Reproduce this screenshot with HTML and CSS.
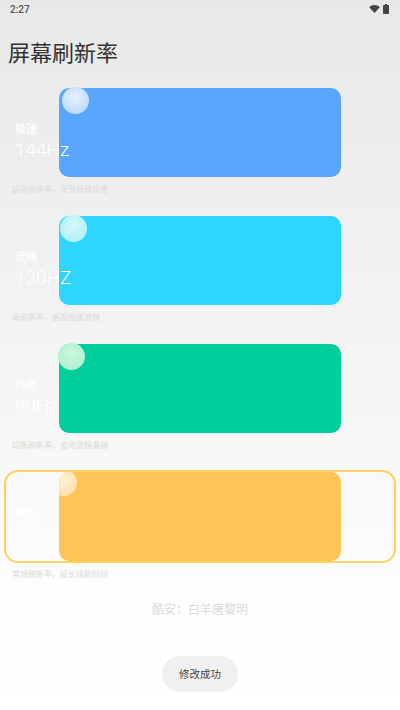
FILE: index.html
```html
<!DOCTYPE html>
<html lang="zh-CN">
<head>
    <meta charset="UTF-8">
    <meta name="viewport" content="width=device-width, initial-scale=1.0">
    <title>屏幕刷新率</title>
    <link rel="stylesheet" href="styles.css">
</head>
<body>
    <div class="page">
        <div class="status-bar">
            <span class="status-time">2:27</span>
            <div class="status-icons">
                <svg class="icon-wifi" viewBox="0 0 12 9"><path d="M0 2.4C1.6 .9 3.7 0 6 0s4.400 .9 6 2.400L6 9z"/></svg>
                <svg class="icon-battery" viewBox="0 0 6 10"><path d="M2 0h2v1h1.200c.4 0 .8 .3 .8 .8V9.200c0 .5-.4 .8-.8 .8H.8C.4 10 0 9.700 0 9.200V1.800C0 1.300 .4 1 .8 1H2z"/></svg>
            </div>
        </div>

        <h1 class="title">屏幕刷新率</h1>

        <div class="options">
            <div class="option">
                <div class="option-body">
                    <div class="card card-blue"><span class="bubble"></span></div>
                    <div class="option-label">
                        <div class="mode">极速</div>
                        <div class="rate">144Hz</div>
                    </div>
                </div>
                <p class="desc">超高刷新率，享受极致快感</p>
            </div>

            <div class="option">
                <div class="option-body">
                    <div class="card card-cyan"><span class="bubble"></span></div>
                    <div class="option-label">
                        <div class="mode">流畅</div>
                        <div class="rate">120HZ</div>
                    </div>
                </div>
                <p class="desc">高刷新率，画面细腻流畅</p>
            </div>

            <div class="option">
                <div class="option-body">
                    <div class="card card-green"><span class="bubble"></span></div>
                    <div class="option-label">
                        <div class="mode">均衡</div>
                        <div class="rate">90Hz</div>
                    </div>
                </div>
                <p class="desc">均衡刷新率，省电流畅兼顾</p>
            </div>

            <div class="option selected">
                <div class="option-body">
                    <div class="card card-yellow"><span class="bubble"></span></div>
                    <div class="option-label">
                        <div class="mode">省电</div>
                        <div class="rate">60Hz</div>
                    </div>
                </div>
                <p class="desc">常规刷新率，延长续航时间</p>
            </div>
        </div>

        <p class="credit">酷安：白羊唐黎明</p>

        <div class="toast">修改成功</div>
    </div>
</body>
</html>
```

FILE: styles.css
```css
* {
    margin: 0;
    padding: 0;
    box-sizing: border-box;
    font-family: "Noto Sans CJK SC", "Liberation Sans", sans-serif;
}

body {
    width: 400px;
    height: 710px;
    overflow: hidden;
    background: linear-gradient(#e8e8e8 0, #efefef 200px, #f7f7f7 450px, #fefefe 610px, #fff 710px);
}

.page {
    height: 710px;
    display: flex;
    flex-direction: column;
}

/* status bar */
.status-bar {
    height: 18px;
    padding: 0 11px 0 10px;
    display: flex;
    align-items: center;
    justify-content: space-between;
}

.status-time {
    font-family: Roboto, sans-serif;
    font-size: 10px;
    font-weight: 500;
    color: #555;
}

.status-icons {
    display: flex;
    align-items: center;
    gap: 3px;
}

.icon-wifi {
    width: 11px;
    height: 8px;
    fill: #444;
}

.icon-battery {
    width: 6px;
    height: 10px;
    fill: #444;
}

.title {
    height: 68px;
    padding: 16px 0 0 8px;
    font-size: 22px;
    line-height: 34px;
    font-weight: 400;
    color: #333;
}

/* refresh rate options */
.option-body {
    position: relative;
    height: 93px;
    margin: 0 4px;
    border: 2px solid transparent;
    border-radius: 14px;
}

.selected .option-body {
    border-color: #fbd35f;
}

.card {
    position: relative;
    width: 282px;
    height: 89px;
    margin-left: 53px;
    border-radius: 10px;
}

.selected .card {
    overflow: hidden;
}

.card-blue { background-color: #5aa6ff; }
.card-cyan { background-color: #2dd5ff; }
.card-green { background-color: #00cf9c; }
.card-yellow { background-color: #ffc455; }

.bubble {
    position: absolute;
    width: 27px;
    height: 27px;
    border-radius: 50%;
}

.card-blue .bubble {
    left: 3px;
    top: -1px;
    background: radial-gradient(circle at 50% 40%, #e6f2fd, #aed3fb);
}

.card-cyan .bubble {
    left: 1px;
    top: -1px;
    background: radial-gradient(circle at 50% 40%, #d5f8f9, #a8eef7);
}

.card-green .bubble {
    left: -1px;
    top: -1px;
    background: radial-gradient(circle at 50% 40%, #cdf7e2, #a5eecb);
}

.card-yellow .bubble {
    left: -9px;
    top: -3px;
    background: radial-gradient(circle at 50% 40%, #fdf0d6, #fddca0);
}

.option-label {
    position: absolute;
    left: 9px;
    top: 31px;
    color: #fff;
}

.mode {
    font-size: 11px;
    line-height: 18px;
    font-weight: 700;
    opacity: 0.9;
}

.rate {
    font-family: Roboto, sans-serif;
    font-size: 19px;
    line-height: 26px;
    font-weight: 300;
}

.desc {
    height: 35px;
    padding: 4px 0 0 12px;
    font-size: 8px;
    line-height: 12px;
    color: #dadada;
}

.selected .desc {
    padding-top: 5px;
}

.credit {
    margin-top: 2px;
    text-align: center;
    font-size: 12px;
    line-height: 18px;
    color: #dadada;
}

.toast {
    width: 76px;
    height: 36px;
    margin: 38px auto 0;
    border-radius: 18px;
    background-color: #f0f0f0;
    text-align: center;
    font-size: 10.500px;
    line-height: 36px;
    color: #444;
}
```
